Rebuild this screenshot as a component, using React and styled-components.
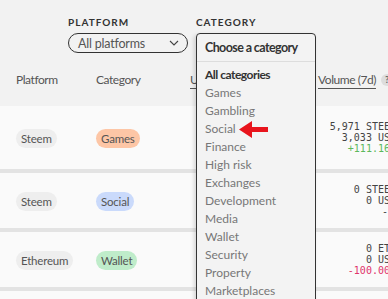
import styled, { createGlobalStyle } from "styled-components";

const GlobalStyle = createGlobalStyle`
  body {
    margin: 0;
    background: #f2f2f2;
    font-family: Lato, "Noto Sans", sans-serif;
    overflow: hidden;
  }
`;

const categories = [
  "Games",
  "Gambling",
  "Social",
  "Finance",
  "High risk",
  "Exchanges",
  "Development",
  "Media",
  "Wallet",
  "Security",
  "Property",
  "Marketplaces",
];

const rows = [
  {
    platform: "Steem",
    category: "Games",
    volume: ["5,971 STEEM", "3,033 USD"],
    change: "+111.16%",
    trend: "up",
  },
  {
    platform: "Steem",
    category: "Social",
    volume: ["0 STEEM", "0 USD"],
    change: "-",
    trend: "none",
  },
  {
    platform: "Ethereum",
    category: "Wallet",
    volume: ["0 ETH", "0 USD"],
    change: "-100.00%",
    trend: "down",
  },
];

const pillColors = {
  Games: "#fdc6a6",
  Social: "#cadafb",
  Wallet: "#bfecca",
};

const App = () => {
  return (
    <Page>
      <GlobalStyle />
      <Filters>
        <Filter>
          <Label>Platform</Label>
          <Select>
            All platforms
            <svg width="10" height="6" viewBox="0 0 10 6">
              <path d="M1 1l4 4 4-4" fill="none" stroke="#444" strokeWidth="1.1" />
            </svg>
          </Select>
        </Filter>
        <Filter>
          <Label>Category</Label>
          <Menu>
            <MenuHead>Choose a category</MenuHead>
            <MenuList>
              <MenuItem $active>All categories</MenuItem>
              {categories.map((c) => (
                <MenuItem key={c}>{c}</MenuItem>
              ))}
            </MenuList>
            <Arrow width="29" height="17" viewBox="0 0 29 17">
              <path d="M0 8.5L13 0v6h16v5H13v6z" fill="#e8141c" />
            </Arrow>
          </Menu>
        </Filter>
      </Filters>

      <HeadRow>
        <HeadCell>Platform</HeadCell>
        <HeadCell>Category</HeadCell>
        <HeadCell $link>Users (7d)</HeadCell>
        <HeadCell>
          <HeadLink>Volume (7d)</HeadLink>
          <Help>?</Help>
        </HeadCell>
      </HeadRow>

      <Body>
        {rows.map((r, i) => (
          <Row key={i} $first={i === 0}>
            <div>
              <Pill>{r.platform}</Pill>
            </div>
            <div>
              <Pill $bg={pillColors[r.category]}>{r.category}</Pill>
            </div>
            <div />
            <Numbers>
              {r.volume.map((v) => (
                <span key={v}>{v}</span>
              ))}
              <Change $trend={r.trend}>{r.change}</Change>
            </Numbers>
          </Row>
        ))}
        <Row />
      </Body>
    </Page>
  );
};

export default App;

const Page = styled.div`
  width: 420px;
  position: relative;
`;

const Filters = styled.div`
  display: flex;
  gap: 8px;
  padding: 17px 0 0 68px;
  height: 53px;
  box-sizing: border-box;
`;

const Filter = styled.div`
  display: flex;
  flex-direction: column;
  gap: 5px;
  position: relative;
`;

const Label = styled.div`
  font-size: 10px;
  font-weight: 700;
  letter-spacing: 1px;
  text-transform: uppercase;
  color: #333;
  line-height: 11px;
`;

const Select = styled.div`
  width: 120px;
  height: 23px;
  box-sizing: border-box;
  border: 1px solid #333;
  border-radius: 12px;
  display: flex;
  align-items: center;
  justify-content: space-between;
  padding: 0 8px 0 9px;
  font-size: 12.5px;
  letter-spacing: -0.2px;
  color: #555;
`;

const Menu = styled.div`
  position: absolute;
  top: 16px;
  left: 0;
  width: 120px;
  height: 300px;
  box-sizing: border-box;
  border: 1px solid #333;
  border-radius: 4px;
  background: #f3f3f3;
  box-shadow: -2px 2px 4px rgba(0, 0, 0, 0.15);
  z-index: 2;
`;

const MenuHead = styled.div`
  height: 27px;
  border-bottom: 1px solid #ddd;
  display: flex;
  align-items: center;
  padding-left: 8px;
  font-size: 12.5px;
  font-weight: 700;
  letter-spacing: -0.6px;
  color: #333;
  white-space: nowrap;
`;

const MenuList = styled.div`
  display: flex;
  flex-direction: column;
  padding: 4px 0 0 8px;
`;

const MenuItem = styled.div`
  height: 18px;
  line-height: 18px;
  font-size: 12px;
  white-space: nowrap;
  color: ${(p) => (p.$active ? "#333" : "#777")};
  font-weight: ${(p) => (p.$active ? 700 : 400)};
  letter-spacing: ${(p) => (p.$active ? "-0.5px" : "0")};
`;

const Arrow = styled.svg`
  position: absolute;
  left: 42px;
  top: 87px;
`;

const HeadRow = styled.div`
  display: grid;
  grid-template-columns: 80px 94px 128px 90px;
  padding-left: 16px;
  height: 53px;
  align-items: center;
  font-size: 12px;
  letter-spacing: -0.45px;
  color: #555;
`;

const HeadCell = styled.div`
  display: flex;
  align-items: center;
  gap: 5px;
  white-space: nowrap;
  text-decoration: ${(p) => (p.$link ? "underline" : "none")};
  text-underline-offset: 4px;
`;

const HeadLink = styled.span`
  text-decoration: underline;
  text-underline-offset: 4px;
`;

const Help = styled.span`
  width: 12px;
  height: 12px;
  border-radius: 50%;
  background: #ddd;
  color: #666;
  font-size: 9px;
  font-weight: 700;
  letter-spacing: 0;
  display: flex;
  align-items: center;
  justify-content: center;
  flex: none;
`;

const Body = styled.div`
  display: flex;
  flex-direction: column;
  gap: 4px;
  background: #e3e3e3;
`;

const Row = styled.div`
  display: grid;
  grid-template-columns: 80px 94px 128px 78px;
  padding-left: 16px;
  height: ${(p) => (p.$first ? "63px" : "55px")};
  align-items: center;
  background: #fafafa;
`;

const Pill = styled.span`
  display: inline-block;
  padding: 0 5px;
  height: 19px;
  line-height: 19px;
  border-radius: 10px;
  background: ${(p) => p.$bg || "#eeeeee"};
  font-size: 11.5px;
  letter-spacing: -0.2px;
  color: #555;
`;

const Numbers = styled.div`
  display: flex;
  flex-direction: column;
  align-items: flex-end;
  font-family: "DejaVu Sans Mono", monospace;
  font-size: 10px;
  line-height: 11px;
  color: #444;
  white-space: nowrap;
`;

const Change = styled.span`
  color: ${(p) =>
    p.$trend === "up" ? "#5cb85c" : p.$trend === "down" ? "#e0336a" : "#444"};
  margin-right: ${(p) => (p.$trend === "none" ? "8px" : "0")};
`;
